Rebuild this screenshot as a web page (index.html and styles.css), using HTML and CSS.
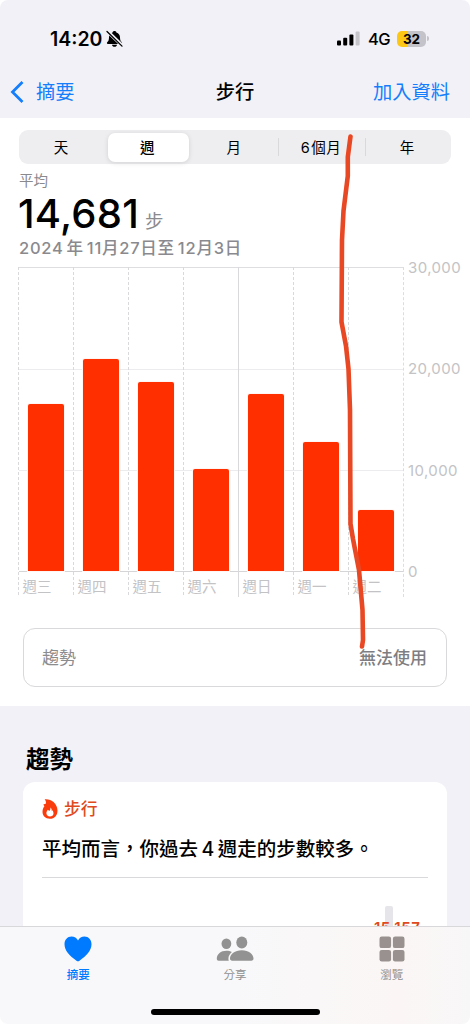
FILE: index.html
```html
<!DOCTYPE html>
<html lang="zh-Hant">
<head>
  <meta charset="UTF-8">
  <meta name="viewport" content="width=device-width, initial-scale=1.0">
  <title>步行</title>
  <link rel="stylesheet" href="styles.css">
</head>
<body>
  <div class="phone">
    <header class="header">
      <div class="status-bar">
        <span class="time">14:20</span>
        <svg class="bell" width="18" height="18" viewBox="0 0 18 18">
          <path d="M8.500 1c-1 0-1.700.6-1.900 1.400C4.200 3.200 3 5.100 3 7.400c0 2.900-.9 3.900-1.800 4.900-.6.800-.2 1.700.7 1.700h13.200c.9 0 1.300-.9.7-1.700-.9-1-1.800-2-1.800-4.900 0-2.300-1.200-4.200-3.600-5C10.200 1.600 9.500 1 8.500 1zM6 14.700h5c-.2 1.300-1.200 2.100-2.500 2.100S6.200 16 6 14.700z"/>
          <path d="M1.400 1.200l15 14.600" stroke="#f2f1f7" stroke-width="3.400"/>
          <path d="M1 1.500l15 14.600" stroke="#000" stroke-width="1.300" stroke-linecap="round"/>
        </svg>
        <svg class="signal" width="23" height="15" viewBox="0 0 23 15">
          <rect x="0" y="9.500" width="4" height="5" rx="1"/>
          <rect x="6.200" y="6.800" width="4" height="7.700" rx="1"/>
          <rect x="12.400" y="3.500" width="4" height="11" rx="1"/>
          <rect x="18.600" y="0.500" width="4" height="14" rx="1" fill="#c5c5ca"/>
        </svg>
        <span class="network">4G</span>
        <span class="battery">32</span>
        <span class="battery-tip"></span>
      </div>
      <nav class="nav-bar">
        <a class="nav-back">
          <svg width="14" height="24" viewBox="0 0 14 24"><path d="M12.500 2L2.500 12l10 10" fill="none" stroke="#157efb" stroke-width="2.800"/></svg>
          <span>摘要</span>
        </a>
        <h1>步行</h1>
        <a class="nav-add">加入資料</a>
      </nav>
    </header>

    <main class="content">
      <section class="summary">
        <div class="segments">
          <span class="segment">天</span>
          <span class="segment active">週</span>
          <span class="segment">月</span>
          <span class="segment divided"><span class="six">6</span>個月</span>
          <span class="segment divided">年</span>
        </div>
        <div class="label">平均</div>
        <div class="steps"><span class="steps-value">14,681</span><span class="steps-unit">步</span></div>
        <div class="date-range">2024<span class="year-unit">年</span>11月27日至<span class="end-day">12月3日</span></div>

        <div class="chart">
          <div class="plot">
            <div class="day"><div class="bar-area"><div class="bar" style="height: 167px"></div></div><span>週三</span></div>
            <div class="day"><div class="bar-area"><div class="bar" style="height: 212px"></div></div><span>週四</span></div>
            <div class="day"><div class="bar-area"><div class="bar" style="height: 189px"></div></div><span>週五</span></div>
            <div class="day"><div class="bar-area"><div class="bar" style="height: 102px"></div></div><span>週六</span></div>
            <div class="day week-start"><div class="bar-area"><div class="bar" style="height: 177px"></div></div><span>週日</span></div>
            <div class="day"><div class="bar-area"><div class="bar" style="height: 129.500px"></div></div><span>週一</span></div>
            <div class="day last"><div class="bar-area"><div class="bar" style="height: 61.500px"></div></div><span>週二</span></div>
          </div>
          <div class="axis">
            <span>30,000</span>
            <span>20,000</span>
            <span>10,000</span>
            <span>0</span>
          </div>
        </div>

        <div class="trend-box">
          <span>趨勢</span>
          <span class="trend-status">無法使用</span>
        </div>
      </section>

      <section class="trends">
        <h2>趨勢</h2>
        <div class="card">
          <div class="card-title">
            <svg width="16" height="20" viewBox="0 0 16 20">
              <path fill="#fa3c0c" fill-rule="evenodd" d="M2.600.3c6.200-.7 12.900 3.900 12.900 11.200 0 5-3 8.300-7.600 8.300C3.300 19.800.5 16.800.5 12.800c0-2.500.9-4.200 1.900-5.500L1.300 5.600l2.400-.8C4.300 3.300 3.800 1.600 2.600.3zM8.400 8.600c.3 1.900-.4 2.500-1.200 3.500l-1.300-1.300c-.9 1.100-1.500 2.200-1.500 3.500 0 2 1.500 3.200 3.500 3.200s3.600-1.200 3.600-3.300c0-1.100-.4-2-1-2.900l-.8.900c.2-1.600-.3-2.700-1.300-3.600z"/>
            </svg>
            <span>步行</span>
          </div>
          <p class="card-text">平均而言，你過去<span class="num">4</span>週走的步數較多。</p>
          <div class="card-chart">
            <div class="mini-bar"></div>
            <span class="mini-value">15,157</span>
          </div>
        </div>
      </section>
    </main>

    <footer class="tab-bar">
      <div class="tabs">
        <div class="tab active">
          <svg width="28" height="26" viewBox="0 0 28 26"><path fill="#007aff" d="M14 25.300c-.5 0-1-.3-1.500-.6C5.600 19.900.5 14.600.5 8.300.5 3.800 3.500.6 7.500.6c2.900 0 5.200 1.500 6.500 4 1.300-2.500 3.600-4 6.500-4 4 0 7 3.200 7 7.700 0 6.300-5.100 11.600-12 16.400-.5.3-1 .6-1.500.6z"/></svg>
          <span>摘要</span>
        </div>
        <div class="tab">
          <svg width="38" height="26" viewBox="0 0 38 26">
            <g fill="#929292">
              <ellipse cx="10.400" cy="7.700" rx="4.900" ry="5.200"/>
              <path d="M.8 22.800c0-4.500 4-8 9.600-8 2.100 0 4 .5 5.500 1.300-2.200 1.900-3.500 4.200-3.500 6.700 0 .7.100 1.300.4 1.900H2.700c-1.200 0-1.900-.6-1.900-1.900z"/>
              <ellipse cx="25.800" cy="6.500" rx="5.500" ry="6"/>
              <path d="M14 22.600c0-4.600 4.900-8.400 11.800-8.400s11.700 3.800 11.700 8.400c0 1.300-.8 2.100-2.200 2.100H16.200c-1.400 0-2.200-.8-2.200-2.100z"/>
            </g>
          </svg>
          <span>分享</span>
        </div>
        <div class="tab">
          <svg width="26" height="26" viewBox="0 0 26 26">
            <g fill="#989190">
              <rect x="0.500" y="0.500" width="11.600" height="11.600" rx="2.200"/>
              <rect x="13.900" y="0.500" width="11.600" height="11.600" rx="2.200"/>
              <rect x="0.500" y="13.900" width="11.600" height="11.600" rx="2.200"/>
              <rect x="13.900" y="13.900" width="11.600" height="11.600" rx="2.200"/>
            </g>
          </svg>
          <span>瀏覽</span>
        </div>
      </div>
      <div class="home-indicator"></div>
    </footer>

    <!-- hand-drawn marker line over the page -->
    <svg class="marker" width="470" height="1024" viewBox="0 0 470 1024">
      <path d="M350.500 136.500L347.800 157V176L343.500 211 342 240 341.500 322 346 346 348.500 369 350 410 350.500 524 353 539 359 570 362.500 610 363 640 362 646.500" fill="none" stroke="#e94824" stroke-width="4.600" stroke-linecap="round" stroke-linejoin="round"/>
    </svg>
  </div>
</body>
</html>
```

FILE: styles.css
```css
* {
  box-sizing: border-box;
}

body {
  margin: 0;
  background: #ffffff;
  font-family: Inter, 'Noto Sans CJK TC', sans-serif;
  color: #000000;
}

.phone {
  position: relative;
  width: 470px;
  height: 1024px;
  overflow: hidden;
  display: flex;
  flex-direction: column;
}

svg {
  display: block;
  flex: none;
}

h1,
h2,
p {
  margin: 0;
}

/* header */
.header {
  flex: none;
  height: 118px;
  background: #f2f1f7;
  border-radius: 8px 8px 0 0;
}

.status-bar {
  display: flex;
  align-items: center;
  height: 64px;
  padding: 13px 41px 0 50px;
}

.time {
  width: 54px;
  font-size: 19.5px;
  font-weight: 600;
}

.bell {
  margin-left: 2px;
}

.signal {
  margin-left: auto;
}

.network {
  margin-left: 8px;
  width: 22px;
  font-size: 16.5px;
  font-weight: 500;
  letter-spacing: -0.6px;
}

.battery {
  margin-left: 7px;
  width: 29px;
  height: 16px;
  border-radius: 5px;
  background: linear-gradient(90deg, #fdc716 10px, #c4c3c9 10px);
  font-size: 13.5px;
  font-weight: 700;
  line-height: 16px;
  text-align: center;
}

.battery-tip {
  margin-left: 1px;
  width: 2px;
  height: 5px;
  border-radius: 0 2px 2px 0;
  background: #c4c3c9;
}

.nav-bar {
  display: grid;
  grid-template-columns: 1fr auto 1fr;
  align-items: center;
  height: 54px;
  padding: 2px 20px 0 10px;
  font-size: 19.3px;
  line-height: 28px;
  color: #157efb;
}

.nav-back {
  display: flex;
  align-items: center;
  gap: 12px;
}

.nav-bar h1 {
  margin-left: 10px;
  font-size: 19.3px;
  font-weight: 500;
  color: #000000;
}

.nav-add {
  text-align: right;
}

/* content */
.content {
  flex: 1;
  min-height: 0;
  overflow: hidden;
  background: #f2f1f7;
}

.summary {
  height: 588px;
  padding: 12px 0 0 19px;
  background: #ffffff;
}

.segments {
  display: grid;
  grid-template-columns: repeat(5, 1fr);
  align-items: center;
  width: 432px;
  height: 34px;
  border-radius: 9px;
  background: #eeeef0;
}

.segment {
  height: 18px;
  padding-right: 2px;
  font-size: 14.5px;
  line-height: 20px;
  letter-spacing: 0.5px;
  text-align: center;
}

.segment.active {
  height: 29px;
  margin: 0 3px;
  border-radius: 7px;
  background: #ffffff;
  box-shadow: 0 1px 5px rgba(0, 0, 0, 0.12);
  font-weight: 500;
  line-height: 29px;
}

.segment.divided {
  border-left: 1px solid #d9d9dc;
}

.six {
  margin-right: 1px;
}

.label {
  height: 32px;
  font-size: 14.5px;
  line-height: 34px;
  color: #8a8a8e;
}

.steps {
  display: flex;
  align-items: baseline;
  height: 38px;
  line-height: 35px;
}

.steps-value {
  width: 127px;
  margin-left: -1px;
  font-size: 40px;
  font-weight: 500;
  letter-spacing: 0.25px;
}

.steps-unit {
  font-size: 18.5px;
  color: #8a8a8e;
}

.date-range {
  height: 33px;
  font-size: 16.5px;
  font-weight: 500;
  line-height: 28px;
  letter-spacing: 0.75px;
  color: #8a8a8e;
}

.year-unit {
  margin: 0 3px;
}

.end-day {
  margin-left: 3px;
}

.chart {
  display: flex;
  height: 330px;
}

.plot {
  display: grid;
  grid-template-columns: repeat(7, 55px);
  background:
    linear-gradient(#dedee0, #dedee0) 0 0 / 385px 1px no-repeat,
    linear-gradient(#ececee, #ececee) 0 102px / 385px 1px no-repeat,
    linear-gradient(#ececee, #ececee) 0 203px / 385px 1px no-repeat,
    linear-gradient(#d5d5d8, #d5d5d8) 0 304px / 385px 1px no-repeat;
}

.day {
  height: 330px;
  margin-left: -1px;
  padding-left: 1px;
  background: repeating-linear-gradient(#d9d9dc 0 3px, transparent 3px 5px) 0 0 / 1px 100% no-repeat;
  font-size: 14.5px;
  color: #c3c3c6;
}

.day.week-start {
  background: linear-gradient(#d9d9dc, #d9d9dc) 0 0 / 1px 100% no-repeat;
}

.day.last {
  border-right: 1px dashed #dddddf;
}

.day span {
  display: block;
  padding-left: 3.5px;
  line-height: 31px;
}

.bar-area {
  display: flex;
  align-items: flex-end;
  height: 304px;
  padding-left: 8.5px;
}

.bar {
  width: 36px;
  border-radius: 2px 2px 0 0;
  background: #ff2f00;
  box-shadow: 0 0 0 1px #fff5f2;
}

.axis {
  display: flex;
  flex-direction: column;
  gap: 81.3px;
  margin: -9px 0 0 4px;
  font-size: 15px;
  line-height: 20px;
  letter-spacing: 0.4px;
  color: #c3c3c6;
}

.trend-box {
  display: flex;
  justify-content: space-between;
  width: 424px;
  height: 59px;
  margin: 31px 0 0 4px;
  padding: 0 19px 0 18px;
  border: 1.500px solid #d9d9dc;
  border-radius: 12px;
  font-size: 17px;
  line-height: 59px;
  color: #8c8c8f;
}

.trend-status {
  font-weight: 500;
  color: #7e7e82;
}

/* trends */
.trends {
  padding: 34px 23px 0;
}

.trends h2 {
  height: 42px;
  padding-left: 3px;
  font-size: 23.5px;
  font-weight: 700;
  line-height: 40px;
}

.card {
  height: 260px;
  padding: 16px 19px 0;
  border-radius: 12px;
  background: #ffffff;
}

.card-title {
  display: flex;
  align-items: center;
  gap: 6px;
  height: 22px;
  font-size: 16.8px;
  font-weight: 500;
  line-height: 24px;
  color: #e04a20;
}

.card-text {
  height: 58px;
  border-bottom: 1px solid #d9d9dc;
  font-size: 19.5px;
  font-weight: 500;
  line-height: 58px;
  white-space: nowrap;
}

.num {
  margin: 0 3.5px;
}

.card-chart {
  display: flex;
  flex-direction: column;
  width: 54px;
  margin: 28px 0 0 332px;
}

.mini-bar {
  width: 8px;
  height: 40px;
  margin-left: 11px;
  border-radius: 2px;
  background: #e5e5ea;
}

.mini-value {
  margin-top: -30px;
  font-size: 15px;
  font-weight: 600;
  line-height: 24px;
  letter-spacing: 0.5px;
  color: #e04a20;
}

/* tab bar */
.tab-bar {
  flex: none;
  height: 98px;
  border-top: 1px solid #d8d7da;
  border-radius: 0 0 8px 8px;
  background: linear-gradient(90deg, #f8f8fa 50%, #fbf6f5 85%, #f8f7f8);
}

.tabs {
  display: grid;
  grid-template-columns: repeat(3, 1fr);
  padding-top: 9px;
}

.tab {
  display: flex;
  flex-direction: column;
  align-items: center;
  font-size: 11.500px;
  line-height: 27px;
  color: #929292;
}

.tab.active {
  color: #007aff;
  font-weight: 500;
}

.home-indicator {
  width: 169px;
  height: 6px;
  margin: 20px auto 0;
  border-radius: 3px;
  background: #000000;
}

.marker {
  position: absolute;
  top: 0;
  left: 0;
  pointer-events: none;
}
```
